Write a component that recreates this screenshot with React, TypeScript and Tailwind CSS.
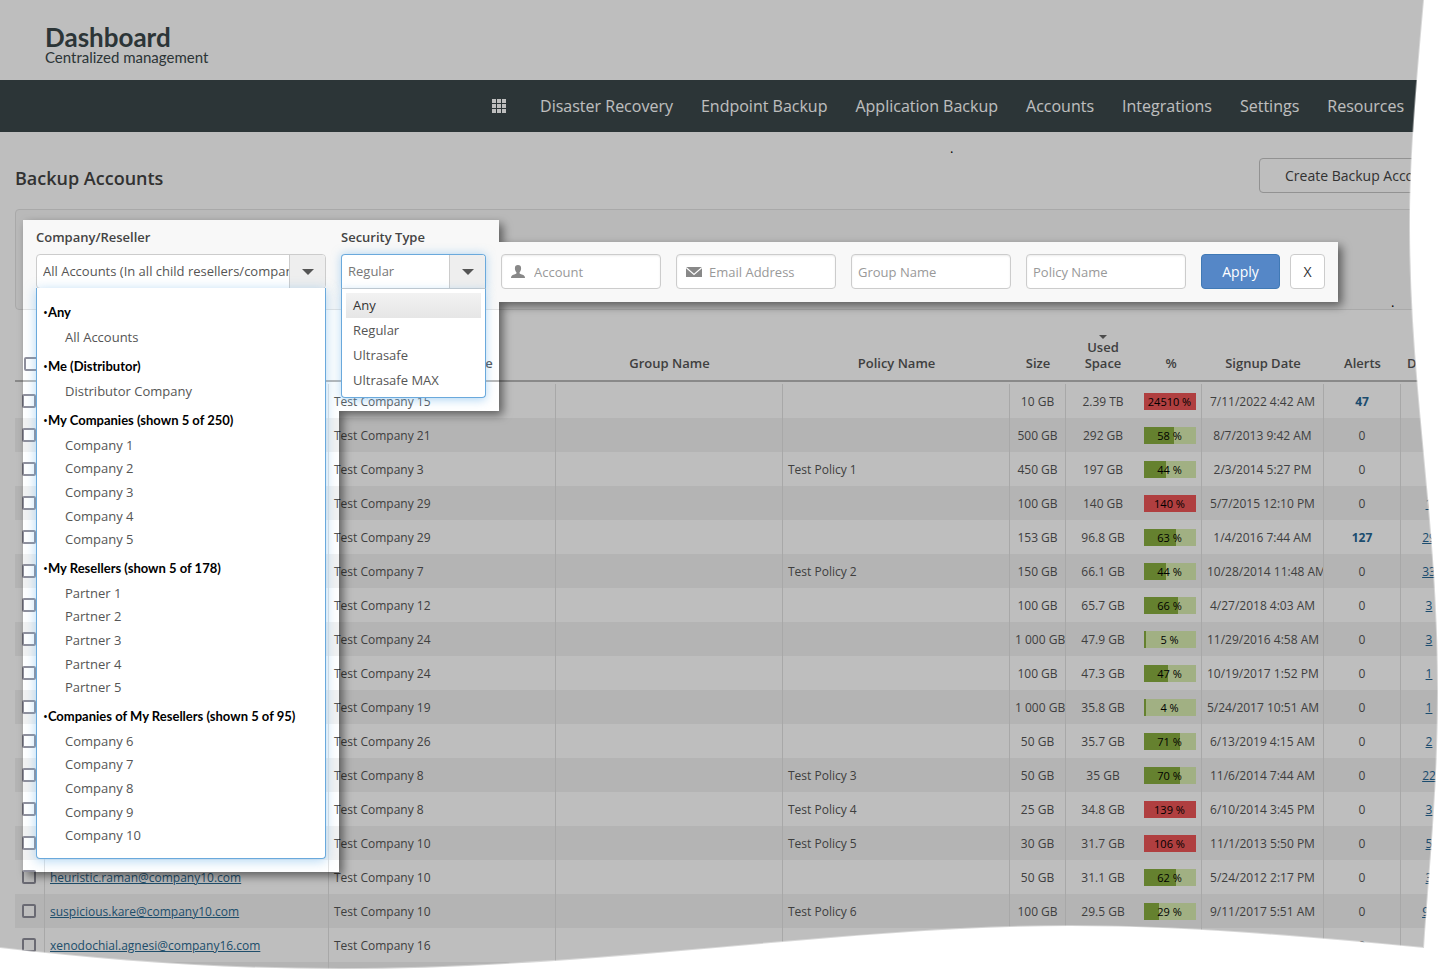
import React from "react";

type Row = {
  email?: string;
  company: string;
  policy?: string;
  size: string;
  used: string;
  percent?: number;
  signup: string;
  alerts: string;
  devices: string;
};

const rows: Row[] = [
  { company: "Test Company 15", size: "10 GB", used: "2.39 TB", percent: 24510, signup: "7/11/2022 4:42 AM", alerts: "47", devices: "" },
  { company: "Test Company 21", size: "500 GB", used: "292 GB", percent: 58, signup: "8/7/2013 9:42 AM", alerts: "0", devices: "" },
  { company: "Test Company 3", policy: "Test Policy 1", size: "450 GB", used: "197 GB", percent: 44, signup: "2/3/2014 5:27 PM", alerts: "0", devices: "" },
  { company: "Test Company 29", size: "100 GB", used: "140 GB", percent: 140, signup: "5/7/2015 12:10 PM", alerts: "0", devices: "1" },
  { company: "Test Company 29", size: "153 GB", used: "96.8 GB", percent: 63, signup: "1/4/2016 7:44 AM", alerts: "127", devices: "29" },
  { company: "Test Company 7", policy: "Test Policy 2", size: "150 GB", used: "66.1 GB", percent: 44, signup: "10/28/2014 11:48 AM", alerts: "0", devices: "33" },
  { company: "Test Company 12", size: "100 GB", used: "65.7 GB", percent: 66, signup: "4/27/2018 4:03 AM", alerts: "0", devices: "3" },
  { company: "Test Company 24", size: "1 000 GB", used: "47.9 GB", percent: 5, signup: "11/29/2016 4:58 AM", alerts: "0", devices: "3" },
  { company: "Test Company 24", size: "100 GB", used: "47.3 GB", percent: 47, signup: "10/19/2017 1:52 PM", alerts: "0", devices: "1" },
  { company: "Test Company 19", size: "1 000 GB", used: "35.8 GB", percent: 4, signup: "5/24/2017 10:51 AM", alerts: "0", devices: "1" },
  { company: "Test Company 26", size: "50 GB", used: "35.7 GB", percent: 71, signup: "6/13/2019 4:15 AM", alerts: "0", devices: "2" },
  { company: "Test Company 8", policy: "Test Policy 3", size: "50 GB", used: "35 GB", percent: 70, signup: "11/6/2014 7:44 AM", alerts: "0", devices: "22" },
  { company: "Test Company 8", policy: "Test Policy 4", size: "25 GB", used: "34.8 GB", percent: 139, signup: "6/10/2014 3:45 PM", alerts: "0", devices: "3" },
  { company: "Test Company 10", policy: "Test Policy 5", size: "30 GB", used: "31.7 GB", percent: 106, signup: "11/1/2013 5:50 PM", alerts: "0", devices: "5" },
  { email: "heuristic.raman@company10.com", company: "Test Company 10", size: "50 GB", used: "31.1 GB", percent: 62, signup: "5/24/2012 2:17 PM", alerts: "0", devices: "3" },
  { email: "suspicious.kare@company10.com", company: "Test Company 10", policy: "Test Policy 6", size: "100 GB", used: "29.5 GB", percent: 29, signup: "9/11/2017 5:51 AM", alerts: "0", devices: "95" },
  { email: "xenodochial.agnesi@company16.com", company: "Test Company 16", size: "", used: "", signup: "", alerts: "0", devices: "" },
  { company: "", size: "", used: "", signup: "", alerts: "", devices: "" },
];

const navItems = [
  "Disaster Recovery",
  "Endpoint Backup",
  "Application Backup",
  "Accounts",
  "Integrations",
  "Settings",
  "Resources",
];

const groups = [
  { title: "Any", items: ["All Accounts"] },
  { title: "Me (Distributor)", items: ["Distributor Company"] },
  { title: "My Companies (shown 5 of 250)", items: ["Company 1", "Company 2", "Company 3", "Company 4", "Company 5"] },
  { title: "My Resellers (shown 5 of 178)", items: ["Partner 1", "Partner 2", "Partner 3", "Partner 4", "Partner 5"] },
  { title: "Companies of My Resellers (shown 5 of 95)", items: ["Company 6", "Company 7", "Company 8", "Company 9", "Company 10"] },
];

const securityTypes = ["Any", "Regular", "Ultrasafe", "Ultrasafe MAX"];

const gothic = "font-['Century_Gothic','URW_Gothic',Lato,sans-serif]";

function GridIcon() {
  return (
    <svg width="14" height="14" viewBox="0 0 14 14" fill="currentColor" aria-hidden="true">
      {[0, 5, 10].map((y) => [0, 5, 10].map((x) => <rect key={`${x}-${y}`} x={x} y={y} width="4" height="4" />))}
    </svg>
  );
}

function UserIcon() {
  return (
    <svg width="14" height="13" viewBox="0 0 14 13" fill="currentColor" aria-hidden="true">
      <path d="M7 0C5 0 3.9 1.200 3.900 3.200c0 1.700.600 3.200 1.500 4v1.400C4.800 9.400 1.600 9.600.6 10.900.1 11.500 0 12.200 0 13h14c0-.8-.1-1.500-.6-2.100-1-1.300-4.200-1.500-4.800-2.300V7.200c.9-.8 1.500-2.300 1.500-4C10.100 1.200 9 0 7 0z" />
    </svg>
  );
}

function MailIcon() {
  return (
    <svg width="16" height="10" viewBox="0 0 16 10" aria-hidden="true">
      <rect width="16" height="10" fill="currentColor" />
      <path d="M0 .5l8 7 8-7" fill="none" stroke="#fff" strokeWidth="1.200" />
    </svg>
  );
}

function DropArrow() {
  return (
    <span className="pointer-events-none flex w-9 shrink-0 items-center justify-center border-l border-[#ccc] bg-[#eee]">
      <svg width="12" height="6" viewBox="0 0 12 6" aria-hidden="true">
        <path d="M0 0h12L6 6z" fill="#555" />
      </svg>
    </span>
  );
}

function TextField({ label, icon }: { label: string; icon?: React.ReactNode }) {
  return (
    <div className="relative w-40">
      {icon && (
        <span className="pointer-events-none absolute inset-y-0 left-[10px] flex items-center text-[#888]">{icon}</span>
      )}
      <input
        type="text"
        aria-label={label}
        placeholder={label}
        className={
          "h-[35px] w-full rounded-[4px] border border-[#ccc] bg-white pr-2 text-[13px] shadow-[inset_0_1px_2px_rgba(0,0,0,0.08)] placeholder:text-[#999] " +
          (icon ? "pl-8" : "pl-[6px]")
        }
      />
    </div>
  );
}

function PercentBar({ value }: { value: number }) {
  const over = value > 100;
  return (
    <div className={"relative mx-auto h-[17px] w-[52px] text-[11px] leading-[17px] text-black " + (over ? "bg-[#ec5556]" : "bg-[#d9edb0]")}>
      {!over && <div className="absolute inset-y-0 left-0 bg-[#88ad3f]" style={{ width: `${value}%` }} />}
      <span className="relative">{value} %</span>
    </div>
  );
}

function Th({ children, className = "" }: { children?: React.ReactNode; className?: string }) {
  return (
    <th className={"h-[72px] border-b-2 border-[#b8b8b8] pb-[9px] text-center align-bottom text-[13px] leading-4 font-semibold " + className}>
      {children}
    </th>
  );
}

function AccountsTable() {
  const cell = "overflow-hidden border-r border-[#e2e2e2] px-[5px] pt-[2px] whitespace-nowrap";
  const box = "block size-[14px] appearance-none rounded-[2px] border-2 border-[#8f8f9b] bg-white";
  return (
    <table className="w-full table-fixed border-separate border-spacing-0 text-[12px] text-[#555]">
      <colgroup>
        <col className="w-[30px]" />
        <col className="w-[284px]" />
        <col />
        <col />
        <col />
        <col className="w-[56px]" />
        <col className="w-[74px]" />
        <col className="w-[62px]" />
        <col className="w-[122px]" />
        <col className="w-[77px]" />
        <col className="w-[56px]" />
      </colgroup>
      <thead>
        <tr>
          <Th>
            <input type="checkbox" aria-label="Select all accounts" className={box + " ml-[9px]"} />
          </Th>
          <Th>Account</Th>
          <Th>Company Name</Th>
          <Th>Group Name</Th>
          <Th>Policy Name</Th>
          <Th>Size</Th>
          <Th>
            <svg className="mx-auto" width="8" height="4" viewBox="0 0 8 4" aria-hidden="true">
              <path d="M0 0h8L4 4z" fill="#666" />
            </svg>
            Used
            <br />
            Space
          </Th>
          <Th>%</Th>
          <Th>Signup Date</Th>
          <Th>Alerts</Th>
          <Th className="pl-1 whitespace-nowrap">Devices</Th>
        </tr>
      </thead>
      <tbody className="before:block before:h-[2px] before:content-['']">
        {rows.map((r, i) => (
          <tr key={i} className="h-[34px] even:bg-[#f2f2f2]">
            <td className="border-r border-[#e2e2e2] pl-[7px]">
              <input type="checkbox" aria-label={`Select ${r.email ?? r.company}`} className={box} />
            </td>
            <td className={cell}>
              {r.email && (
                <a href="#account" className="text-[#2a6990] underline">
                  {r.email}
                </a>
              )}
            </td>
            <td className={cell}>{r.company}</td>
            <td className={cell} />
            <td className={cell}>{r.policy}</td>
            <td className={cell + " text-center"}>{r.size}</td>
            <td className="pt-[2px] text-center whitespace-nowrap">{r.used}</td>
            <td className="border-r border-[#e2e2e2] pr-[2px] text-center">
              {r.percent !== undefined && <PercentBar value={r.percent} />}
            </td>
            <td className={cell + " text-center"}>{r.signup}</td>
            <td className={cell + " text-center"}>
              {r.alerts.length > 1 ? (
                <a href="#alerts" className="font-bold text-[#266694]">
                  {r.alerts}
                </a>
              ) : (
                r.alerts
              )}
            </td>
            <td className="pt-[2px] text-center">
              {r.devices && (
                <a href="#devices" className="text-[#266694] underline">
                  {r.devices}
                </a>
              )}
            </td>
          </tr>
        ))}
      </tbody>
    </table>
  );
}

function CompanyFilter() {
  return (
    <div className="w-[290px]">
      <label htmlFor="company" className="mb-[7px] block text-[13px] leading-5 font-semibold text-[#444]">
        Company/Reseller
      </label>
      <div className="relative">
        <div className="flex h-[35px] overflow-hidden rounded-[4px] border border-[#ccc] bg-white">
          <select id="company" className="min-w-0 flex-1 appearance-none pl-[6px] text-[13px] text-[#555]">
            <option>All Accounts (In all child resellers/companies)</option>
          </select>
          <DropArrow />
        </div>
        <div className="absolute top-[34px] left-0 z-10 flex w-full flex-col gap-[5px] rounded-b-[4px] border border-t-0 border-[#6aa9dc] bg-white px-[6px] pt-3 pb-[11px] shadow-[0_2px_12px_rgba(102,175,233,0.5)]">
          {groups.map((g) => (
            <div key={g.title}>
              <p className={"h-[25px] text-[13px] leading-[25px] font-bold whitespace-nowrap text-black " + gothic}>
                <span className="font-['Open_Sans',sans-serif] font-normal">•</span>
                {g.title}
              </p>
              <ul className={"flex flex-col " + (g.items.length > 1 ? "h-[118px]" : "h-6")}>
                {g.items.map((it) => (
                  <li key={it} className="flex flex-1 items-center pl-[22px] text-[13px] leading-5 text-[#555]">
                    {it}
                  </li>
                ))}
              </ul>
            </div>
          ))}
        </div>
      </div>
    </div>
  );
}

function SecurityFilter() {
  return (
    <div className="w-[145px]">
      <label htmlFor="security" className="mb-[7px] block text-[13px] leading-5 font-semibold text-[#444]">
        Security Type
      </label>
      <div className="relative">
        <div className="flex h-[35px] overflow-hidden rounded-t-[4px] border border-[#6aa9dc] border-b-[#ccc] bg-white shadow-[0_0_10px_rgba(102,175,233,0.5)]">
          <select id="security" defaultValue="Regular" className="min-w-0 flex-1 appearance-none pl-[6px] text-[13px] text-[#777]">
            {securityTypes.map((s) => (
              <option key={s}>{s}</option>
            ))}
          </select>
          <DropArrow />
        </div>
        <ul className="absolute top-full left-0 z-10 w-full rounded-b-[4px] border border-t-0 border-[#6aa9dc] bg-white p-1 text-[13px] text-[#555] shadow-[0_2px_10px_rgba(102,175,233,0.5)]">
          {securityTypes.map((s) => (
            <li
              key={s}
              className="pl-[7px] leading-[25px] first:bg-linear-to-b first:from-[#f2f2f2] first:to-[#e6e6e6] first:text-[#333]"
            >
              {s}
            </li>
          ))}
        </ul>
      </div>
    </div>
  );
}

const spotlight = "M23 220H499V242H1338V302H499V411H339V872H23Z";

/* Dims everything except the filter controls and their open menus. */
function Scrim() {
  const outside = `M0 0H4000V3000H0Z ${spotlight}`;
  return (
    <svg className="pointer-events-none absolute inset-0 z-20 h-full w-full" aria-hidden="true">
      <defs>
        <clipPath id="outside">
          <path d={outside} clipRule="evenodd" />
        </clipPath>
        <filter id="soft" x="-5%" y="-5%" width="110%" height="110%">
          <feGaussianBlur stdDeviation="5" />
        </filter>
      </defs>
      <path d={outside} fillRule="evenodd" fill="#000" fillOpacity="0.255" />
      <g clipPath="url(#outside)">
        <path d={spotlight} transform="translate(4 4)" fill="#000" fillOpacity="0.5" filter="url(#soft)" />
      </g>
    </svg>
  );
}

/* Wavy torn border along the right and bottom sides. */
function TornEdge() {
  const page =
    "M0 0H1424C1416 90 1409.7 160 1410 230C1410.500 390 1438 520 1438 690C1438 790 1429 870 1424 948C1300 936 1180 926 1070 926C850 926 600 969 340 969C220 969 110 961 0 948Z";
  return (
    <svg
      className="pointer-events-none absolute inset-0 z-30 h-full w-full"
      viewBox="0 0 1439 970"
      preserveAspectRatio="none"
      aria-hidden="true"
    >
      <path d={`M-5 -5H1445V975H-5Z ${page}`} fillRule="evenodd" fill="#fff" />
      <path
        d={page.replace("M0 0H1424", "M1424 0").replace("Z", "")}
        fill="none"
        stroke="#fff"
        strokeOpacity="0.4"
        strokeWidth="2"
      />
    </svg>
  );
}

export default function App() {
  return (
    <div className="relative h-screen overflow-hidden bg-white font-['Open_Sans',sans-serif] text-[#444]">
      <header className={"h-20 pt-[25px] pl-[45px] text-[#3b484b] " + gothic}>
        <h1 className="text-[26px] leading-6 font-bold">Dashboard</h1>
        <p className="text-[15px] leading-4">Centralized management</p>
      </header>

      <nav className="flex h-[52px] items-center justify-end gap-7 bg-[#3b484b] pr-[35px] text-[16px] whitespace-nowrap text-white">
        <button type="button" aria-label="Apps" className="mr-[6px]">
          <GridIcon />
        </button>
        {navItems.map((n) => (
          <a key={n} href="#nav">
            {n}
          </a>
        ))}
      </nav>

      <main className="-mr-[18px] pl-[15px]">
        <div className="flex h-[77px] items-center justify-between pt-4">
          <h2 className="text-[18px] font-semibold">Backup Accounts</h2>
          <button
            type="button"
            className="mb-[6px] h-[35px] w-[198px] rounded-[4px] border border-[#c4c4c4] pl-[25px] text-left text-[14px] whitespace-nowrap"
          >
            Create Backup Account
          </button>
        </div>

        <form className="flex items-end gap-[15px] rounded-[4px] border border-[#e3e3e3] bg-[#f8f8f8] pt-[17px] pb-5 pl-5">
          <CompanyFilter />
          <SecurityFilter />
          <TextField label="Account" icon={<UserIcon />} />
          <TextField label="Email Address" icon={<MailIcon />} />
          <TextField label="Group Name" />
          <TextField label="Policy Name" />
          <div className="flex gap-[10px]">
            <button type="button" className="h-[35px] w-[79px] rounded-[4px] border border-[#4079b5] bg-[#5587c7] text-[14px] text-white">
              Apply
            </button>
            <button type="button" aria-label="Clear filter" className="h-[35px] w-[35px] rounded-[4px] border border-[#ccc] bg-white text-[14px] text-[#333]">
              X
            </button>
          </div>
        </form>

        <AccountsTable />
      </main>

      <span className="absolute top-[138px] left-[950px] text-[13px] leading-5 text-black">.</span>
      <span className="absolute top-[292px] left-[1391px] text-[13px] leading-5 text-black">.</span>

      <Scrim />
      <TornEdge />
    </div>
  );
}
